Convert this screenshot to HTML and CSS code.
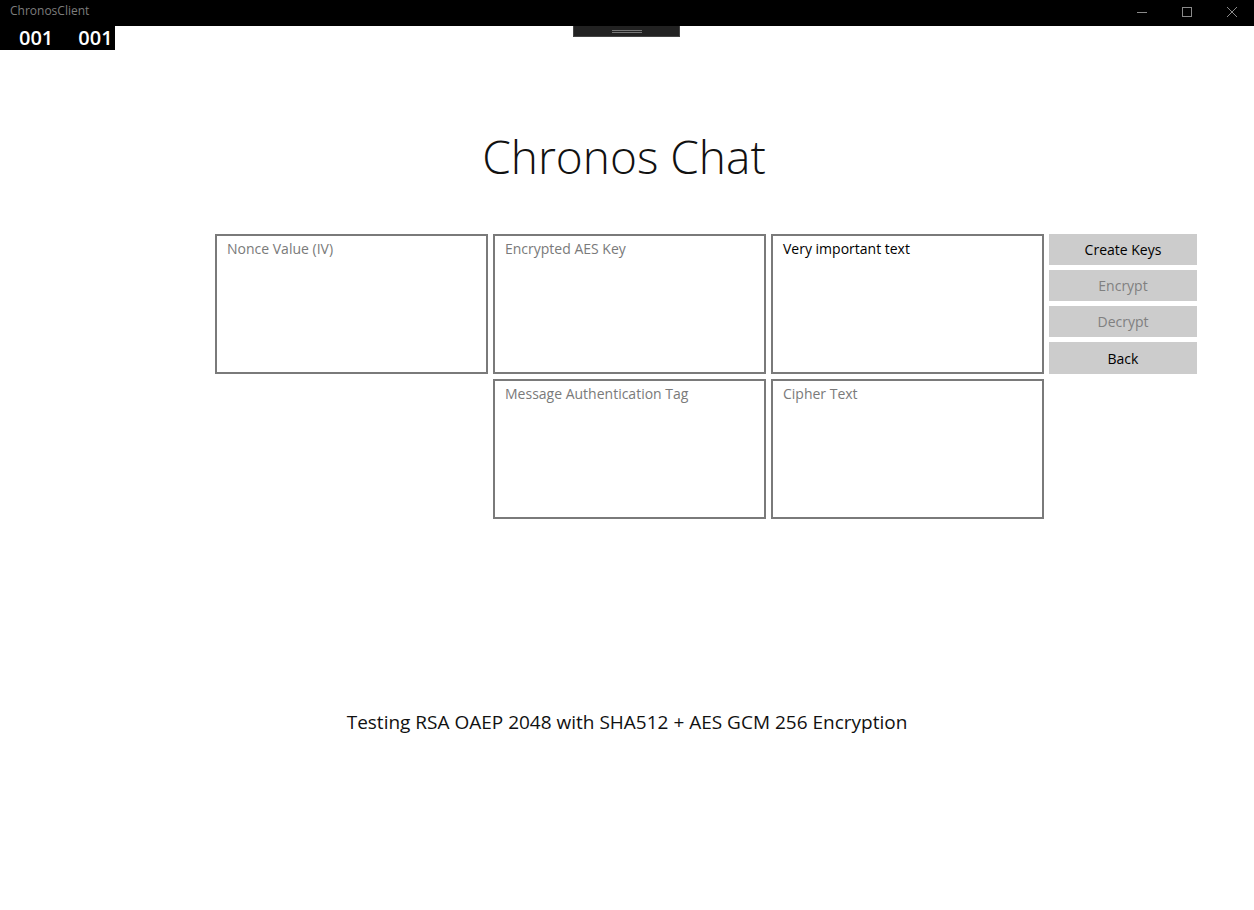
FILE: index.html
```html
<!DOCTYPE html>
<html>
<head>
<meta charset="utf-8">
<link rel="stylesheet" href="styles.css">
</head>
<body>
<div class="titlebar">
  <span class="app-name">ChronosClient</span>
  <div class="controls">
    <svg class="ctl" width="12" height="12" viewBox="0 0 12 12"><path d="M1 6.5H11" stroke="#8a8a8a" stroke-width="1"/></svg>
    <svg class="ctl" width="12" height="12" viewBox="0 0 12 12"><rect x="1.5" y="1.5" width="9" height="9" fill="none" stroke="#8a8a8a" stroke-width="1"/></svg>
    <svg class="ctl" width="12" height="12" viewBox="0 0 12 12"><path d="M1 1L11 11M11 1L1 11" stroke="#8a8a8a" stroke-width="1"/></svg>
  </div>
</div>
<div class="counter"><span>001</span><span>001</span></div>
<div class="handle"><div class="grip"></div></div>

<main class="page">
  <h1 class="title">Chronos Chat</h1>
  <div class="grid">
    <div class="box placeholder">Nonce Value (IV)</div>
    <div class="box placeholder">Encrypted AES Key</div>
    <div class="box">Very important text</div>
    <div class="buttons">
      <div class="btn">Create Keys</div>
      <div class="btn disabled">Encrypt</div>
      <div class="btn disabled">Decrypt</div>
      <div class="btn">Back</div>
    </div>
    <div class="empty"></div>
    <div class="box placeholder">Message Authentication Tag</div>
    <div class="box placeholder">Cipher Text</div>
  </div>
  <p class="footer">Testing RSA OAEP 2048 with SHA512 + AES GCM 256 Encryption</p>
</main>
</body>
</html>
```

FILE: styles.css
```css
html, body {
  margin: 0;
  padding: 0;
  background: #ffffff;
  font-family: "Open Sans", "Noto Sans", sans-serif;
  color: #000;
}
body {
  width: 1254px;
  height: 910px;
  position: relative;
  overflow: hidden;
}
.titlebar {
  height: 26px;
  background: #000;
  display: flex;
  align-items: center;
  justify-content: space-between;
  padding-left: 10px;
  box-sizing: border-box;
}
.app-name {
  color: #7d7d7d;
  font-size: 12px;
  line-height: 14px;
  margin-top: -4px;
}
.controls {
  display: flex;
  align-items: center;
  height: 100%;
}
.ctl {
  width: 12px;
  height: 12px;
  padding: 0 16px 0 17px;
  margin-top: -3px;
}
.counter {
  position: absolute;
  left: 0;
  top: 26px;
  width: 115px;
  height: 24px;
  background: #000;
  color: #fff;
  font-family: "Open Sans", "Noto Sans", sans-serif;
  font-weight: 600;
  font-size: 20px;
  line-height: 24px;
  display: flex;
  gap: 25px;
  padding-left: 19px;
  box-sizing: border-box;
}
.handle {
  position: absolute;
  left: 573px;
  top: 26px;
  width: 107px;
  height: 11px;
  background: #222;
  border: 1px solid #444;
  border-top: none;
  box-sizing: border-box;
  display: flex;
  justify-content: center;
  align-items: center;
}
.grip {
  width: 30px;
  height: 3px;
  border-top: 1px solid #777;
  border-bottom: 1px solid #777;
  box-sizing: border-box;
}
.page {
  display: flex;
  flex-direction: column;
}
.title {
  margin: 98px 0 0 0;
  text-align: center;
  font-weight: 300;
  font-size: 46px;
  line-height: 64px;
  color: #111;
  height: 64px;
  padding-right: 6px;
}
.grid {
  margin: 46px 0 0 215px;
  display: grid;
  grid-template-columns: 273px 273px 273px 148px;
  grid-template-rows: 140px 140px;
  column-gap: 5px;
  row-gap: 5px;
}
.box {
  border: 2px solid #7a7a7a;
  box-sizing: border-box;
  padding: 2px 10px;
  font-size: 14px;
  line-height: 21px;
  color: #000;
}
.placeholder {
  color: #7a7a7a;
}
.buttons {
  display: flex;
  flex-direction: column;
  gap: 5px;
}
.btn {
  height: 31px;
  background: #cccccc;
  display: flex;
  align-items: center;
  justify-content: center;
  font-size: 14px;
  color: #000;
}
.btn:nth-child(4) {
  height: 32px;
}
.btn.disabled {
  color: #808080;
}
.footer {
  margin: 190px 0 0 0;
  text-align: center;
  font-size: 19px;
  line-height: 26px;
  color: #111;
  padding-left: 0;
}
```
